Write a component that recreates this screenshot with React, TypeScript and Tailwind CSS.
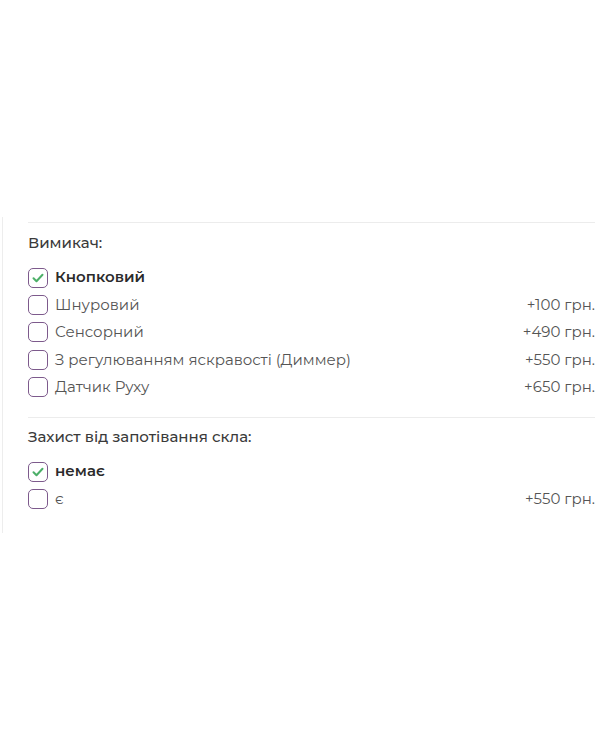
import { useState } from "react"

type Option = { label: string; price?: string }
type Group = { title: string; options: Option[] }

const GROUPS: Group[] = [
  {
    title: "Вимикач:",
    options: [
      { label: "Кнопковий" },
      { label: "Шнуровий", price: "+100 грн." },
      { label: "Сенсорний", price: "+490 грн." },
      { label: "З регулюванням яскравості (Диммер)", price: "+550 грн." },
      { label: "Датчик Руху", price: "+650 грн." },
    ],
  },
  {
    title: "Захист від запотівання скла:",
    options: [{ label: "немає" }, { label: "є", price: "+550 грн." }],
  },
]

function Check({ on }: { on: boolean }) {
  return (
    <span className="flex h-[20px] w-[20px] shrink-0 items-center justify-center rounded-[5px] border-[1.5px] border-[#7d5a8c] bg-white">
      {on && (
        <svg width="12" height="10" viewBox="0 0 12 10" fill="none">
          <path d="M1.5 5.2 4.5 8.2 10.5 1.8" stroke="#4caf68" strokeWidth="2" strokeLinecap="round" strokeLinejoin="round" />
        </svg>
      )}
    </span>
  )
}

function OptionGroup({ group, first }: { group: Group; first: boolean }) {
  const [picked, setPicked] = useState(0)
  return (
    <div className={`${first ? "pt-[10px] pb-[16px]" : "pt-[9px]"} border-t border-[#ececec]`}>
      <h3 className="mb-[11px] text-[15px] font-medium leading-[20px] text-[#3a3a3a]">{group.title}</h3>
      <ul>
        {group.options.map((o, i) => (
          <li
            key={o.label}
            onClick={() => setPicked(i)}
            className="flex h-[27.4px] cursor-pointer items-center justify-between"
          >
            <span className="flex items-center gap-[7px]">
              <Check on={picked === i} />
              <span className={`text-[15px] ${picked === i ? "font-semibold text-[#2b2b2b]" : "text-[#555]"}`}>
                {o.label}
              </span>
            </span>
            {o.price && <span className="text-[15px] text-[#555]">{o.price}</span>}
          </li>
        ))}
      </ul>
    </div>
  )
}

export default function App() {
  return (
    <div className="min-h-[750px] bg-white pt-[217px] font-['Montserrat','Open_Sans',sans-serif]">
      <div className="ml-[2px] h-[316px] border-l border-[#ededed] pt-[5px] pl-[25px] pr-[5px]">
        {GROUPS.map((g, i) => (
          <OptionGroup key={g.title} group={g} first={i === 0} />
        ))}
      </div>
    </div>
  )
}
